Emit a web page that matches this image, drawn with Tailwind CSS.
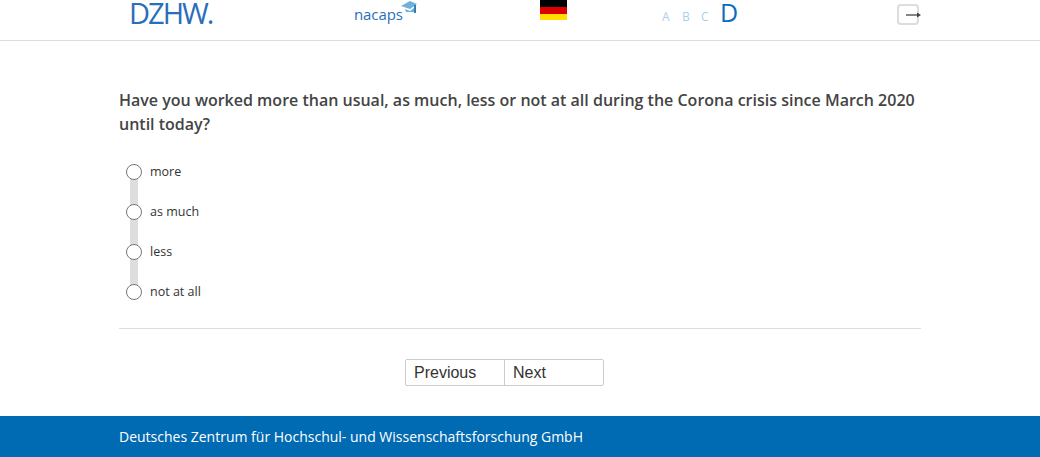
<!DOCTYPE html>
<html lang="en">
<head>
  <meta charset="UTF-8">
  <title>Nacaps</title>
  <script src="https://cdn.jsdelivr.net/npm/@tailwindcss/browser@4"></script>
</head>
<body class="flex flex-col h-[457px] overflow-hidden bg-white font-['Open_Sans',sans-serif] text-[#444]">
  <!-- Header -->
  <header class="h-[41px] shrink-0 border-b border-[#ddd] overflow-hidden">
    <div class="flex h-10 pl-[129px] pr-[120px] items-start">
      <span class="w-[171px] mt-px text-[#2a6ebb] text-[29px] leading-[24px] tracking-[-2px]">DZHW.</span>
      <div class="w-[240px] pl-[54px] flex items-start">
        <span class="mt-[4px] text-[#2a6ebb] text-[15px] leading-[20px] tracking-[-0.1px]">nacaps</span>
        <svg class="mt-px -ml-[2px]" width="16" height="14" viewBox="0 0 16 14"><path d="M0 5 9 0l7 3-7 5z" fill="#6fb1d6"/><path d="M4 8l5 2 4-3v4H5z" fill="#6fb1d6"/><rect x="13" y="4" width="2" height="8" fill="#2f7fb5"/></svg>
      </div>
      <div class="w-[27px] h-5 flex flex-col">
        <div class="h-[7px] bg-black"></div>
        <div class="h-[7px] bg-[#dd0000]"></div>
        <div class="h-[6px] bg-[#ffdf00]"></div>
      </div>
      <div class="ml-[95px] w-[236px] flex items-start text-[#a8d0ec] text-[12px] leading-[16px]">
        <span class="mt-[9px] w-5">A</span>
        <span class="mt-[9px] w-[19px]">B</span>
        <span class="mt-[9px] w-[19px]">C</span>
        <span class="text-[#0a6cbd] text-[25px] leading-[24px] font-medium">D</span>
      </div>
      <div class="mt-[4px] -ml-[1px] w-[22px] h-[21px] border-2 border-[#ddd] rounded-[4px] relative">
        <svg class="absolute left-[7px] top-[4px]" width="17" height="10" viewBox="0 0 17 10"><path d="M0 5h12" stroke="#444" stroke-width="1.3"/><path d="M11 2.5 15 5l-4 2.5z" fill="#444"/></svg>
      </div>
    </div>
  </header>

  <!-- Question -->
  <main class="grow pt-[47px] px-[119px]">
    <h1 class="w-[802px] text-[16px] leading-[24px] font-semibold text-[#444]">Have you worked more than usual, as much, less or not at all during the Corona crisis since March 2020 until today?</h1>
    <div class="relative mt-[28px] border-b border-[#ddd] h-[165px]">
      <div class="absolute left-[11px] top-[12px] h-[116px] w-2 bg-[#ddd]"></div>
      <div class="relative flex flex-col gap-[24px] pl-[7px] text-[12.5px] text-[#333]">
        <label class="flex items-center gap-[8px] h-4"><span class="w-4 h-4 rounded-full border border-[#777] bg-white"></span>more</label>
        <label class="flex items-center gap-[8px] h-4"><span class="w-4 h-4 rounded-full border border-[#777] bg-white"></span>as much</label>
        <label class="flex items-center gap-[8px] h-4"><span class="w-4 h-4 rounded-full border border-[#777] bg-white"></span>less</label>
        <label class="flex items-center gap-[8px] h-4"><span class="w-4 h-4 rounded-full border border-[#777] bg-white"></span>not at all</label>
      </div>
    </div>
    <div class="flex justify-center mt-[30px] mr-[31px] font-['Liberation_Sans',sans-serif] text-[16px] text-[#333]">
      <button class="w-[100px] h-[27px] text-left pl-2 border border-[#ccc] rounded-l-[2px]">Previous</button>
      <button class="w-[100px] h-[27px] text-left pl-2 -ml-px border border-[#ccc] rounded-r-[2px]">Next</button>
    </div>
  </main>

  <!-- Footer -->
  <footer class="h-[41px] shrink-0 bg-[#006ab3] pl-[119px] text-white text-[14px] leading-[41px]">Deutsches Zentrum für Hochschul- und Wissenschaftsforschung GmbH</footer>
</body>
</html>
